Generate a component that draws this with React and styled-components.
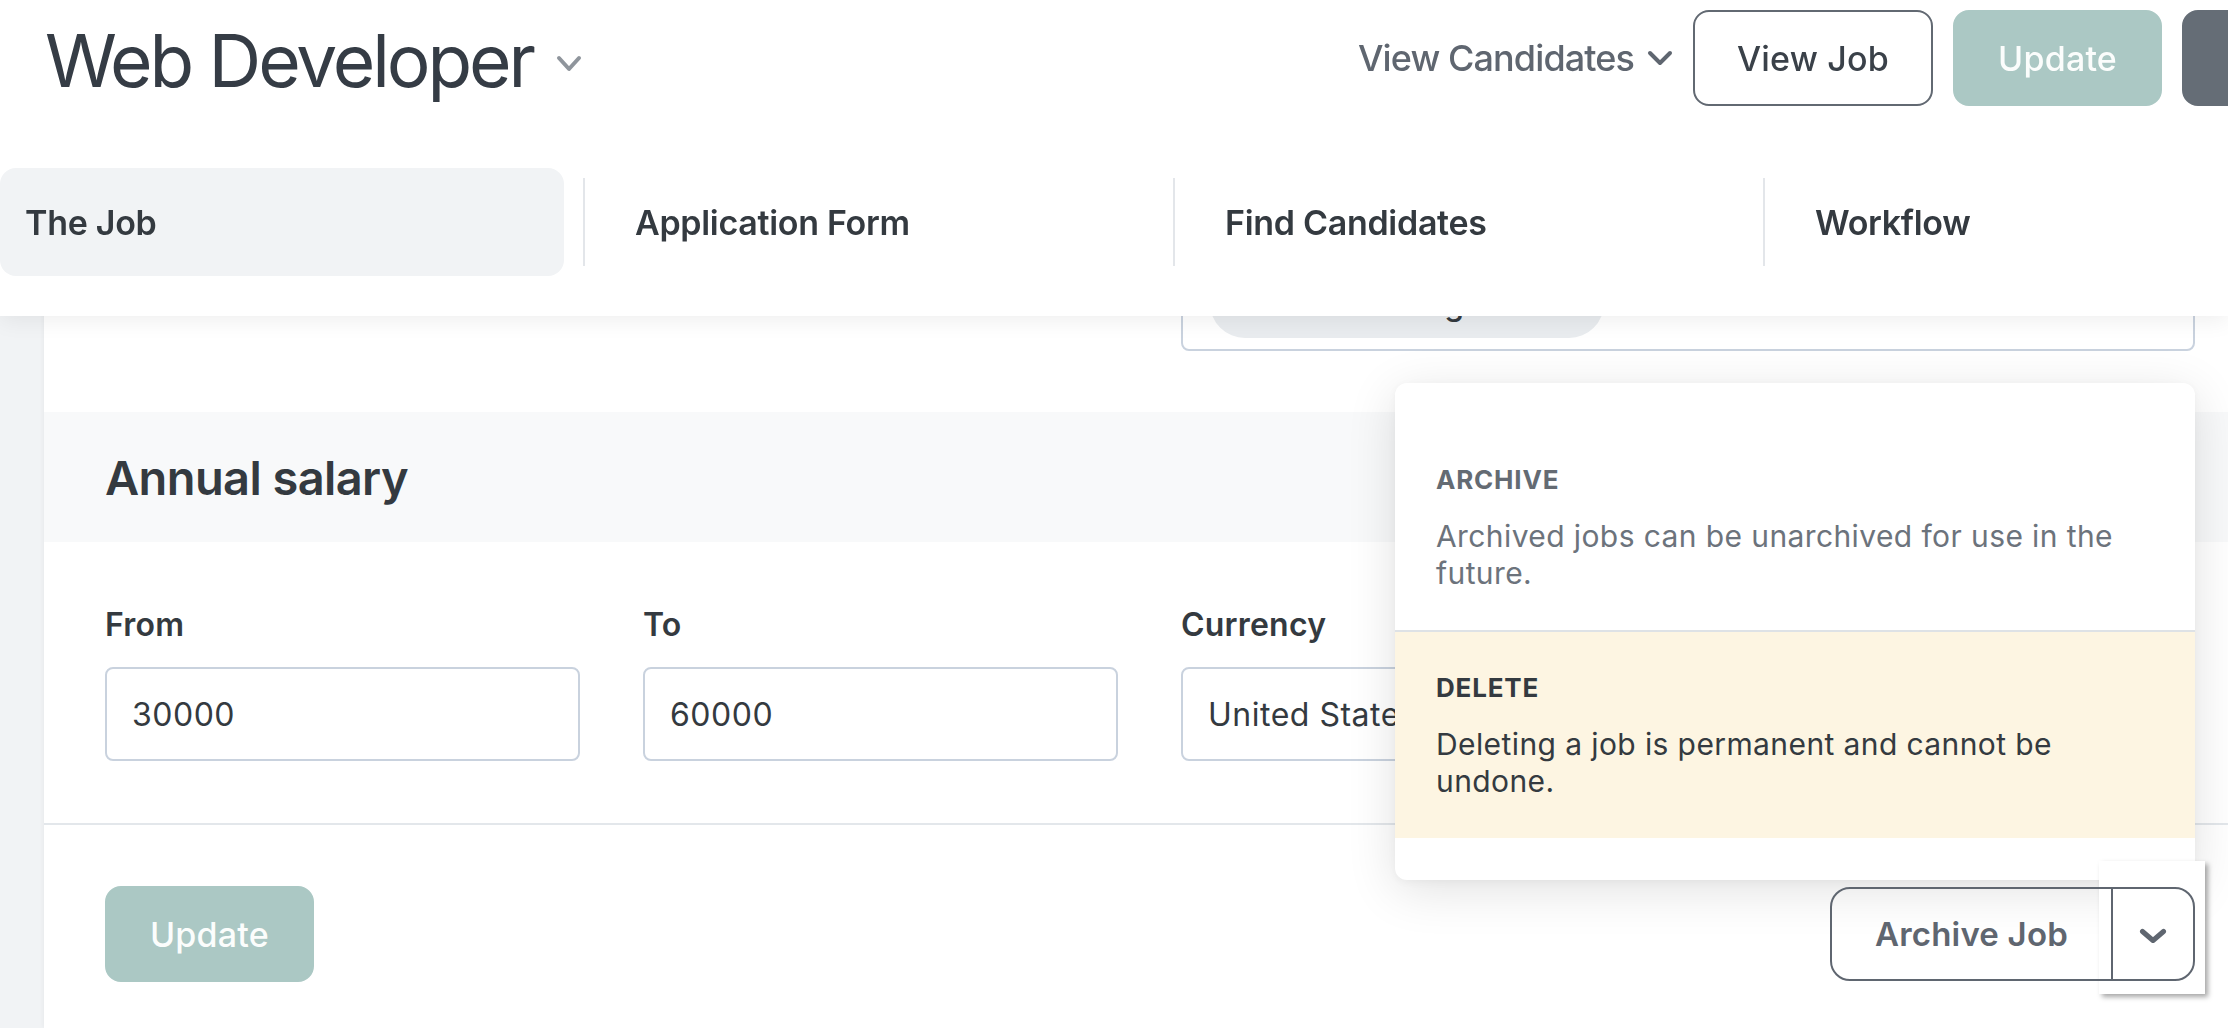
import React from "react";
import styled, { createGlobalStyle } from "styled-components";

const GlobalStyle = createGlobalStyle`
  html, body {
    margin: 0;
    padding: 0;
    overflow: hidden;
    background: #ffffff;
  }
  body {
    font-family: Inter, "Noto Sans", sans-serif;
    color: #353c45;
  }
  * {
    box-sizing: border-box;
  }
`;

function Chevron({ width, height, stroke, color }) {
  return (
    <svg width={width} height={height} viewBox={`0 0 ${width} ${height}`} fill="none">
      <polyline
        points={`${stroke / 2 + 1},${stroke / 2 + 1} ${width / 2},${height - stroke / 2 - 1} ${width - stroke / 2 - 1},${stroke / 2 + 1}`}
        stroke={color}
        strokeWidth={stroke}
        strokeLinecap="round"
        strokeLinejoin="round"
      />
    </svg>
  );
}

function Header() {
  return (
    <StyledHeader>
      <TopRow>
        <Title>Web Developer</Title>
        <TitleToggle>
          <Chevron width={26} height={17} stroke={4} color="#8f959c" />
        </TitleToggle>
        <Actions>
          <CandidatesLink>
            View Candidates
            <Chevron width={26} height={16} stroke={4} color="#5f6670" />
          </CandidatesLink>
          <Button $variant="outline" $pad={42}>View Job</Button>
          <Button $variant="teal">Update</Button>
          <Button $variant="dark" aria-label="More actions" />
        </Actions>
      </TopRow>
      <Tabs>
        <Tab $active>The Job</Tab>
        <TabDivider />
        <Tab>Application Form</Tab>
        <TabDivider />
        <Tab>Find Candidates</Tab>
        <TabDivider />
        <Tab>Workflow</Tab>
      </Tabs>
    </StyledHeader>
  );
}

function ArchiveMenu() {
  return (
    <Menu>
      <MenuItem>
        <MenuHeading>ARCHIVE</MenuHeading>
        <MenuText>Archived jobs can be unarchived for use in the future.</MenuText>
      </MenuItem>
      <MenuItem $danger>
        <MenuHeading $danger>DELETE</MenuHeading>
        <MenuText $danger>Deleting a job is permanent and cannot be undone.</MenuText>
      </MenuItem>
    </Menu>
  );
}

export default function App() {
  return (
    <>
      <GlobalStyle />
      <Header />
      <Main>
        <SideStrip />
        <Card>
          <TopFields>
            <FieldGrid>
              <TagInput $col={3}>
                <TagPill>Web Designer</TagPill>
              </TagInput>
            </FieldGrid>
          </TopFields>

          <SectionHead>Annual salary</SectionHead>

          <FieldsBlock>
            <FieldGrid>
              <Field>
                <Label>From</Label>
                <Input defaultValue="30000" />
              </Field>
              <Field>
                <Label>To</Label>
                <Input defaultValue="60000" />
              </Field>
              <Field>
                <Label>Currency</Label>
                <Input defaultValue="United States Dollar (USD)" />
              </Field>
            </FieldGrid>
          </FieldsBlock>

          <Footer>
            <Button $variant="teal" $pad={43}>Update</Button>
            <SplitWrap>
              <ArchiveMenu />
              <FocusBox />
              <SplitButton>
                <SplitMain>Archive Job</SplitMain>
                <SplitToggle>
                  <Chevron width={28} height={16} stroke={5} color="#5f6670" />
                </SplitToggle>
              </SplitButton>
            </SplitWrap>
          </Footer>
        </Card>
      </Main>
    </>
  );
}

const StyledHeader = styled.header`
  position: fixed;
  top: 0;
  left: 0;
  width: 100%;
  height: 316px;
  background: #ffffff;
  z-index: 10;
  box-shadow: 0 4px 22px rgba(0, 0, 0, 0.07);
  overflow: hidden;
`;

const TopRow = styled.div`
  display: flex;
  align-items: center;
  height: 116px;
  padding-left: 45px;
`;

const Title = styled.h1`
  margin: 4px 0 0;
  font-size: 73px;
  font-weight: 400;
  line-height: 1;
  letter-spacing: -3.1px;
  color: #353c45;
`;

const TitleToggle = styled.span`
  display: flex;
  margin: 10px 0 0 23px;
`;

const Actions = styled.div`
  display: flex;
  align-items: center;
  gap: 20px;
  margin-left: auto;
  margin-right: -160px;
`;

const CandidatesLink = styled.span`
  display: flex;
  align-items: center;
  gap: 13px;
  font-size: 36px;
  font-weight: 500;
  letter-spacing: -0.9px;
  color: #5f6670;
`;

const buttonColors = {
  outline: { bg: "#ffffff", border: "#626972", color: "#3a4149" },
  teal: { bg: "#abc8c4", border: "#abc8c4", color: "#fbfdfc" },
  dark: { bg: "#656d76", border: "#656d76", color: "#ffffff" },
};

const Button = styled.button`
  height: 96px;
  min-width: ${(p) => (p.$variant === "dark" ? "206px" : "0")};
  padding: 0 ${(p) => p.$pad ?? 43}px;
  border-radius: 16px;
  border: 2px solid ${(p) => buttonColors[p.$variant].border};
  background: ${(p) => buttonColors[p.$variant].bg};
  color: ${(p) => buttonColors[p.$variant].color};
  font-family: Inter, sans-serif;
  font-size: 34px;
  font-weight: 500;
  letter-spacing: 0.2px;
  cursor: pointer;
`;

const Tabs = styled.nav`
  display: flex;
  align-items: center;
  margin-top: 52px;
  height: 108px;
`;

const Tab = styled.div`
  flex: 0 0 550px;
  height: 108px;
  display: flex;
  align-items: center;
  padding-left: 31px;
  border-radius: 16px;
  background: ${(p) => (p.$active ? "#f1f3f5" : "transparent")};
  font-size: 34px;
  font-weight: 600;
  letter-spacing: -0.3px;
  color: #343a40;

  &:first-child {
    flex-basis: 564px;
    padding-left: 25px;
  }
`;

const TabDivider = styled.span`
  flex: 0 0 2px;
  height: 88px;
  margin: 0 19px;
  background: #e3e6ea;
`;

const Main = styled.main`
  display: flex;
  min-height: 1028px;
`;

const SideStrip = styled.div`
  flex: 0 0 44px;
  background: #f1f3f5;
`;

const Card = styled.div`
  flex: 1;
  background: #ffffff;
  padding-top: 257px;
  box-shadow: -2px 0 4px rgba(0, 0, 0, 0.03);
`;

const TopFields = styled.div`
  padding: 0 33px 0 61px;
`;

const FieldGrid = styled.div`
  display: grid;
  grid-template-columns: 475px 475px 1fr;
  column-gap: 63px;
`;

const TagInput = styled.div`
  grid-column: ${(p) => p.$col};
  height: 94px;
  border: 2px solid #c9d2de;
  border-radius: 8px;
  padding: 9px 27px;
`;

const TagPill = styled.div`
  width: 394px;
  height: 70px;
  border-radius: 35px;
  background: #e9ecef;
  display: flex;
  align-items: center;
  justify-content: center;
  font-size: 32px;
  font-weight: 500;
  color: #343a40;
`;

const SectionHead = styled.h2`
  margin: 61px 0 0;
  height: 130px;
  display: flex;
  align-items: center;
  padding-left: 61px;
  background: #f8f9fa;
  font-size: 47px;
  font-weight: 600;
  letter-spacing: -0.6px;
  color: #343a40;
`;

const FieldsBlock = styled.div`
  padding: 63px 33px 62px 61px;
  border-bottom: 2px solid #e3e7eb;
`;

const Field = styled.div`
  display: flex;
  flex-direction: column;
  min-width: 0;
`;

const Label = styled.label`
  font-size: 32px;
  line-height: 40px;
  font-weight: 600;
  letter-spacing: 0.2px;
  color: #343a40;
  margin-bottom: 22px;
`;

const Input = styled.input`
  height: 94px;
  width: 100%;
  border: 2px solid #c9d2de;
  border-radius: 8px;
  padding: 0 25px;
  font-family: Inter, sans-serif;
  font-size: 32px;
  letter-spacing: 0.5px;
  color: #343a40;
  background: #ffffff;
  outline: none;
`;

const Footer = styled.div`
  display: flex;
  justify-content: space-between;
  align-items: center;
  padding: 61px 33px 0 61px;
`;

const SplitWrap = styled.div`
  position: relative;
  z-index: 5;
`;

const Menu = styled.div`
  position: absolute;
  right: 0;
  bottom: calc(100% + 7px);
  width: 800px;
  padding: 41px 0 42px;
  border-radius: 12px;
  background: #ffffff;
  box-shadow: 0 10px 50px rgba(0, 0, 0, 0.12), 0 2px 8px rgba(0, 0, 0, 0.04);
`;

const MenuItem = styled.div`
  padding: 40px 41px 38px;
  background: ${(p) => (p.$danger ? "#fdf5e2" : "#ffffff")};
  & + & {
    border-top: 2px solid #dee2e6;
  }
`;

const MenuHeading = styled.div`
  font-size: 26px;
  line-height: 32px;
  font-weight: 700;
  letter-spacing: 0.8px;
  color: ${(p) => (p.$danger ? "#343a40" : "#646b73")};
  margin-bottom: 22px;
`;

const MenuText = styled.div`
  font-size: 30px;
  line-height: 37px;
  letter-spacing: 0.4px;
  color: ${(p) => (p.$danger ? "#343a40" : "#6c737c")};
`;

const FocusBox = styled.div`
  position: absolute;
  top: -26px;
  right: -10px;
  width: 106px;
  height: 133px;
  background: #ffffff;
  box-shadow: 3px 3px 5px rgba(0, 0, 0, 0.35);
`;

const SplitButton = styled.div`
  position: relative;
  z-index: 1;
  display: flex;
  height: 94px;
  border: 2px solid #5f6670;
  border-radius: 20px;
`;

const SplitMain = styled.span`
  display: flex;
  align-items: center;
  padding: 0 43px;
  border-right: 2px solid #5f6670;
  font-size: 33px;
  font-weight: 600;
  letter-spacing: 0.2px;
  color: #5f6670;
`;

const SplitToggle = styled.span`
  display: flex;
  align-items: center;
  justify-content: center;
  width: 80px;
  padding-top: 4px;
`;
